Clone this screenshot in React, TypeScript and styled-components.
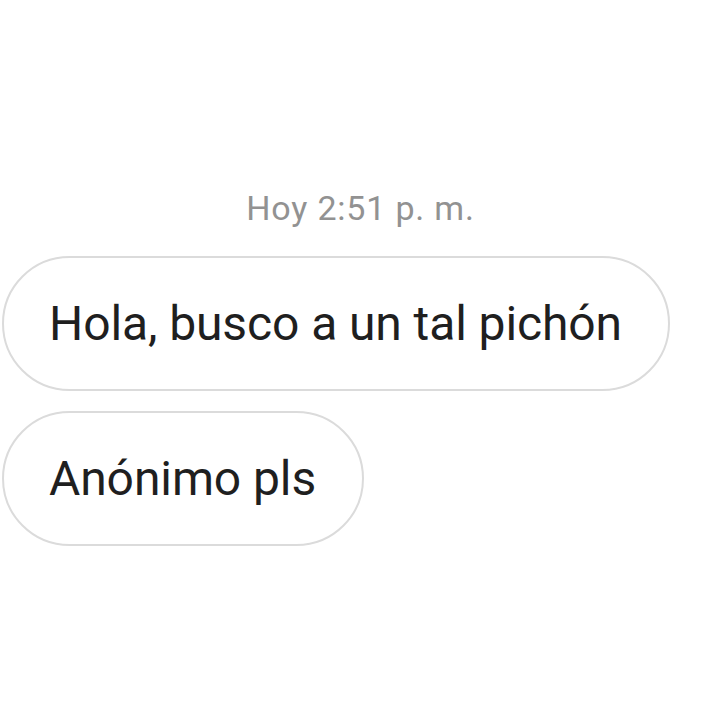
import React from "react";
import styled, { createGlobalStyle } from "styled-components";

const GlobalStyle = createGlobalStyle`
  html, body {
    margin: 0;
    padding: 0;
    background: #ffffff;
  }
  body {
    font-family: Roboto, "Noto Sans", "Liberation Sans", sans-serif;
  }
`;

const Screen = styled.div`
  width: 717px;
  height: 718px;
  background: #ffffff;
  display: flex;
  flex-direction: column;
  padding-top: 188px;
  box-sizing: border-box;
`;

const Timestamp = styled.div`
  text-align: center;
  font-size: 34px;
  line-height: 40px;
  letter-spacing: 0.8px;
  color: #929292;
  margin-bottom: 28px;
  padding-left: 4px;
`;

const Thread = styled.div`
  display: flex;
  flex-direction: column;
  align-items: flex-start;
  gap: 20px;
  padding-left: 2px;
`;

const Bubble = styled.div`
  box-sizing: border-box;
  height: 135px;
  display: flex;
  align-items: center;
  padding: 0 46px 0 45px;
  border: 2px solid #dbdbdb;
  border-radius: 68px;
  font-size: 48px;
  line-height: 56px;
  letter-spacing: -0.1px;
  color: #1f1f1f;
  white-space: nowrap;
`;

export default function App() {
  return (
    <>
      <GlobalStyle />
      <Screen>
        <Timestamp>Hoy 2:51 p. m.</Timestamp>
        <Thread>
          <Bubble>Hola, busco a un tal pichón</Bubble>
          <Bubble>Anónimo pls</Bubble>
        </Thread>
      </Screen>
    </>
  );
}
